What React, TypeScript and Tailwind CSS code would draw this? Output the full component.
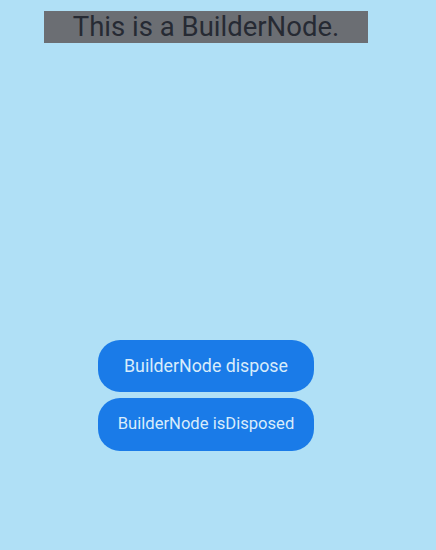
export default function App() {
  return (
    <div
      className="w-[436px] h-[550px] bg-[#b0e0f6] flex flex-col"
      style={{ fontFamily: 'Roboto, "Noto Sans", sans-serif' }}
    >
      <div className="mt-[11px] ml-[44px] w-[324px] h-[32px] bg-[#6b6e73] flex items-center justify-center">
        <span className="text-[27.5px] leading-none text-[#262a33]">This is a BuilderNode.</span>
      </div>
      <div className="mt-[297px] ml-[98px] flex flex-col gap-[6px]">
        <button className="w-[216px] h-[52px] rounded-[22px] bg-[#1a7be8] text-[17.8px] text-[#d8ecfb]">
          BuilderNode dispose
        </button>
        <button className="w-[216px] h-[53px] rounded-[22px] bg-[#1a7be8] text-[16.6px] text-[#d8ecfb]">
          BuilderNode isDisposed
        </button>
      </div>
    </div>
  )
}
